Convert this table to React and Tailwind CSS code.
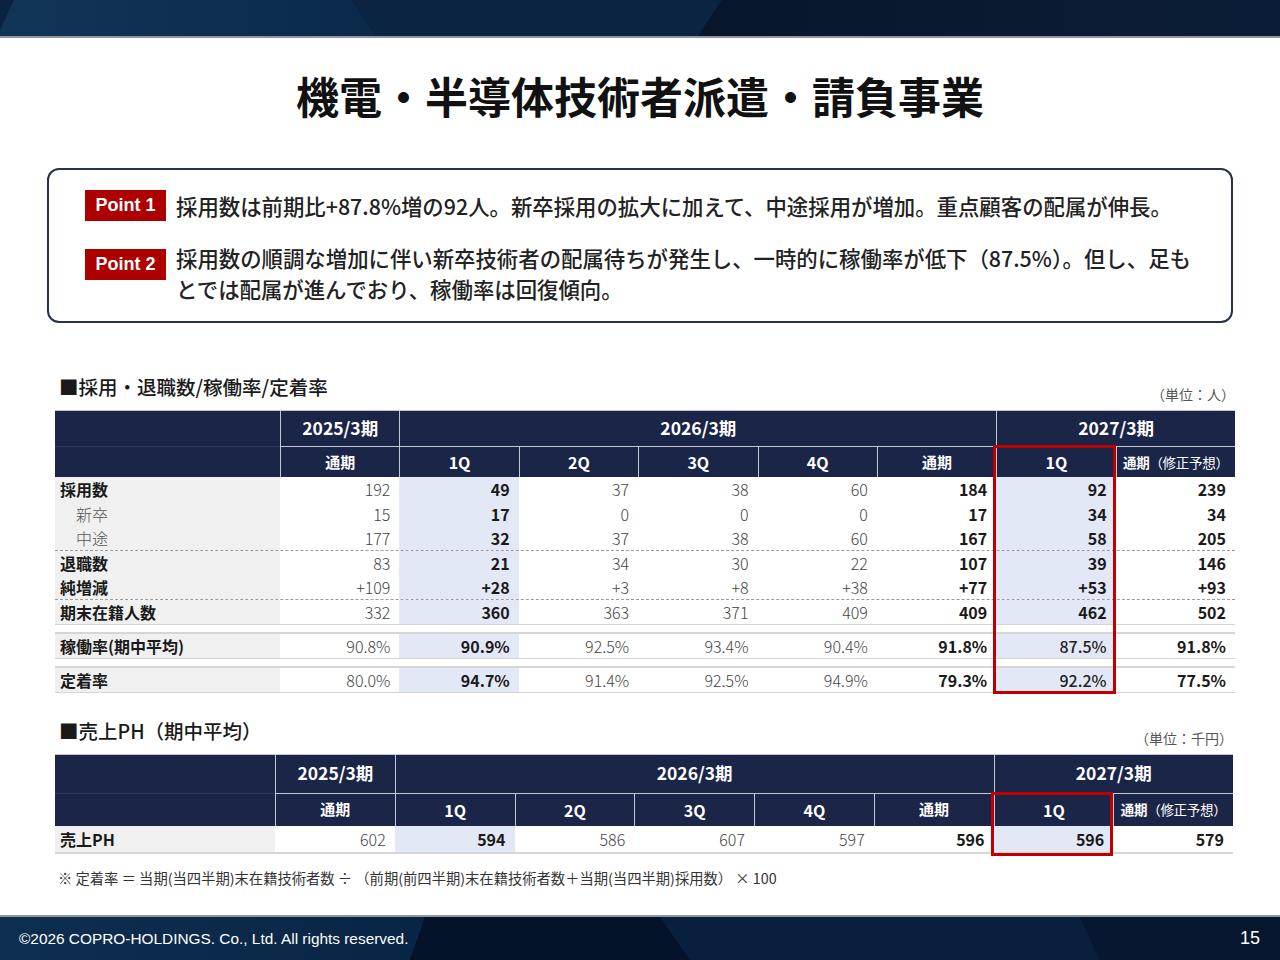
import React from "react";

const colCls = [
  "bg-white font-light text-[#444]",
  "bg-[#e3e8f6] font-bold text-[#1a1a1a]",
  "bg-white font-light text-[#444]",
  "bg-white font-light text-[#444]",
  "bg-white font-light text-[#444]",
  "bg-white font-bold text-[#1a1a1a]",
  "bg-[#e3e8f6] font-bold text-[#1a1a1a]",
  "bg-white font-bold text-[#1a1a1a]",
];

const staff = [
  { label: "採用数", v: ["192", "49", "37", "38", "60", "184", "92", "239"], line: "" },
  { label: "新卒", sub: true, v: ["15", "17", "0", "0", "0", "17", "34", "34"], line: "" },
  { label: "中途", sub: true, v: ["177", "32", "37", "38", "60", "167", "58", "205"], line: "border-b border-dashed border-[#9a9a9a]" },
  { label: "退職数", v: ["83", "21", "34", "30", "22", "107", "39", "146"], line: "border-b border-dashed border-[#9a9a9a]" },
  { label: "純増減", v: ["+109", "+28", "+3", "+8", "+38", "+77", "+53", "+93"], line: "border-b border-dashed border-[#9a9a9a]" },
  { label: "期末在籍人数", v: ["332", "360", "363", "371", "409", "409", "462", "502"], line: "border-b-2 border-[#d6d6d6]" },
];

const rates = [
  { label: "稼働率(期中平均)", v: ["90.8%", "90.9%", "92.5%", "93.4%", "90.4%", "91.8%", "87.5%", "91.8%"] },
  { label: "定着率", v: ["80.0%", "94.7%", "91.4%", "92.5%", "94.9%", "79.3%", "92.2%", "77.5%"] },
];

function DataRow({ grid, label, sub, v, rowCls, soft }) {
  return (
    <div className={grid + " " + rowCls}>
      <div
        className={
          sub
            ? "bg-[#f0f0f0] flex items-center pl-[21px] font-light text-[#555]"
            : "bg-[#f0f0f0] flex items-center pl-[5px] font-bold text-[#1a1a1a]"
        }
      >
        {label}
      </div>
      {v.map((x, i) => (
        <div
          key={i}
          className={
            "flex items-center justify-end pr-[9px] " +
            (soft && i === 6 ? "bg-[#e3e8f6] font-medium text-[#222]" : colCls[i])
          }
        >
          {x}
        </div>
      ))}
    </div>
  );
}

function Head({ grid, h1, h2 }) {
  const line = "border-l-[1.5px] border-t-[1.5px] border-[#c3c8d6] flex items-center justify-center";
  return (
    <>
      <div className={grid + " " + h1 + " bg-[#1b2548] text-white border-t border-[#c3c8d6]"}>
        <div />
        <div className="border-l-[1.5px] border-[#c3c8d6] flex items-center justify-center font-bold text-[17.5px]">2025/3期</div>
        <div className="col-span-5 border-l-[1.5px] border-[#c3c8d6] flex items-center justify-center font-bold text-[17.5px]">2026/3期</div>
        <div className="col-span-2 border-l-[1.5px] border-[#c3c8d6] flex items-center justify-center font-bold text-[17.5px]">2027/3期</div>
      </div>
      <div className={grid + " " + h2 + " bg-[#1b2548] text-white font-bold"}>
        <div className="border-t-[1.5px] border-[#2f3a60]" />
        <div className={line + " text-[15px]"}>通期</div>
        <div className={line + " text-[16px]"}>1Q</div>
        <div className={line + " text-[16px]"}>2Q</div>
        <div className={line + " text-[16px]"}>3Q</div>
        <div className={line + " text-[16px]"}>4Q</div>
        <div className={line + " text-[15px]"}>通期</div>
        <div className={line + " text-[16px]"}>1Q</div>
        <div className={line + " text-[13.5px] tracking-[-0.3px]"}>
          通期<span className="font-normal">（修正予想）</span>
        </div>
      </div>
    </>
  );
}

function TopBar() {
  return (
    <div className="relative h-[38px] border-b-2 border-[#8f969f] overflow-hidden">
      <svg className="absolute inset-0 w-full h-full" viewBox="0 0 1280 36" preserveAspectRatio="none">
        <defs>
          <linearGradient id="tb1" x1="0" x2="1" y1="0" y2="0">
            <stop offset="0" stopColor="#123456" />
            <stop offset="1" stopColor="#0b2a4b" />
          </linearGradient>
          <linearGradient id="tb2" x1="0" x2="1" y1="0" y2="0">
            <stop offset="0" stopColor="#040e1e" />
            <stop offset="1" stopColor="#0b1d36" />
          </linearGradient>
        </defs>
        <rect width="1280" height="36" fill="url(#tb2)" />
        <polygon points="0,0 352,0 376,36 0,36" fill="url(#tb1)" />
        <polygon points="0,0 14,0 0,30" fill="#0a2340" />
        <polygon points="352,0 722,0 698,36 376,36" fill="#0a2442" />
      </svg>
    </div>
  );
}

function Footer() {
  return (
    <div className="relative mt-auto h-[45px] border-t-2 border-[#8f969f] overflow-hidden">
      <svg className="absolute inset-0 w-full h-full" viewBox="0 0 1280 43" preserveAspectRatio="none">
        <defs>
          <linearGradient id="fb1" x1="0" x2="1" y1="0" y2="0">
            <stop offset="0" stopColor="#0e2e50" />
            <stop offset="1" stopColor="#092545" />
          </linearGradient>
        </defs>
        <rect width="1280" height="43" fill="#071a33" />
        <polygon points="0,0 425,0 410,43 0,43" fill="url(#fb1)" />
        <polygon points="425,0 660,0 690,43 410,43" fill="#04132a" />
        <polygon points="660,0 1080,0 1100,43 690,43" fill="#08203d" />
        <polygon points="1080,0 1280,0 1280,43 1100,43" fill="#06172f" />
      </svg>
      <div className="relative h-full flex items-center justify-between pl-[19px] pr-[20px] text-white font-['Liberation_Sans',Arial,sans-serif]">
        <span className="text-[15.4px]">©2026 COPRO-HOLDINGS. Co., Ltd. All rights reserved.</span>
        <span className="text-[18px]">15</span>
      </div>
    </div>
  );
}

export default function App() {
  const g1 = "grid grid-cols-[225px_repeat(8,minmax(0,1fr))]";
  const g2 = "grid grid-cols-[220px_repeat(8,minmax(0,1fr))]";
  return (
    <div className="w-[1280px] h-[960px] flex flex-col bg-white text-[#222] font-['Noto_Sans_CJK_JP','Noto_Sans',sans-serif]">
      <TopBar />

      <h1 className="mt-[29px] text-center text-[43px] leading-[56px] font-bold text-[#111]">
        機電・半導体技術者派遣・請負事業
      </h1>

      <div className="mt-[45px] ml-[47px] w-[1186px] h-[155px] border-2 border-[#27314f] rounded-[12px] pl-[36px] pt-[20px]">
        <div className="flex items-center gap-[10px]">
          <div className="w-[81px] h-[31px] bg-[#ad0000] text-white flex items-center justify-center font-['Liberation_Sans',Arial,sans-serif] font-bold text-[18px]">
            Point 1
          </div>
          <p className="text-[21.4px] leading-[31px] font-medium whitespace-nowrap">
            採用数は前期比+87.8%増の92人。新卒採用の拡大に加えて、中途採用が増加。重点顧客の配属が伸長。
          </p>
        </div>
        <div className="mt-[21px] flex items-start gap-[10px]">
          <div className="mt-[7px] w-[81px] h-[31px] bg-[#ad0000] text-white flex items-center justify-center font-['Liberation_Sans',Arial,sans-serif] font-bold text-[18px]">
            Point 2
          </div>
          <p className="text-[21.4px] leading-[31px] font-medium whitespace-nowrap">
            採用数の順調な増加に伴い新卒技術者の配属待ちが発生し、一時的に稼働率が低下（87.5%）。但し、足も
            <br />
            とでは配属が進んでおり、稼働率は回復傾向。
          </p>
        </div>
      </div>

      <div className="mt-[52px] ml-[55px] w-[1180px]">
        <div className="flex justify-between items-start mb-[6px]">
          <h2 className="pl-[4px] text-[19.5px] leading-[24px] font-medium text-[#1a1a1a]">■採用・退職数/稼働率/定着率</h2>
          <span className="pt-[9px] pr-0 text-[14px] leading-[20px] text-[#555]">（単位：人）</span>
        </div>
        <div className="relative text-[16px]">
          <Head grid={g1} h1="h-[36px]" h2="h-[31px]" />
          {staff.map((r) => (
            <DataRow key={r.label} grid={g1} label={r.label} sub={r.sub} v={r.v} rowCls={"h-[24.6px] " + r.line} />
          ))}
          <div className="h-[7px]" />
          <DataRow grid={g1} label={rates[0].label} v={rates[0].v} soft rowCls="h-[27px] border-y-2 border-[#d6d6d6]" />
          <div className="h-[7px]" />
          <DataRow grid={g1} label={rates[1].label} v={rates[1].v} soft rowCls="h-[27px] border-y-2 border-[#d6d6d6]" />
          <div className="absolute left-[938px] top-[35px] bottom-[-1px] w-[123px] border-[3px] border-[#c00000] pointer-events-none" />
        </div>
      </div>

      <div className="mt-[26px] ml-[55px] w-[1178px]">
        <div className="flex justify-between items-start mb-[6px]">
          <h2 className="pl-[4px] text-[19.5px] leading-[24px] font-medium text-[#1a1a1a]">■売上PH（期中平均）</h2>
          <span className="pt-[9px] pr-0 text-[14px] leading-[20px] text-[#555]">（単位：千円）</span>
        </div>
        <div className="relative text-[16px]">
          <Head grid={g2} h1="h-[39px]" h2="h-[33px]" />
          <DataRow
            grid={g2}
            label="売上PH"
            v={["602", "594", "586", "607", "597", "596", "596", "579"]}
            rowCls="h-[28px] border-b-2 border-[#d6d6d6]"
          />
          <div className="absolute left-[936px] top-[38px] bottom-[-2px] w-[122px] border-[3px] border-[#c00000] pointer-events-none" />
        </div>
        <p className="mt-[14px] pl-[3px] text-[14.3px] leading-[20px] text-[#333]">
          ※ 定着率 ＝ 当期(当四半期)末在籍技術者数 ÷ （前期(前四半期)末在籍技術者数＋当期(当四半期)採用数） × 100
        </p>
      </div>

      <Footer />
    </div>
  );
}
